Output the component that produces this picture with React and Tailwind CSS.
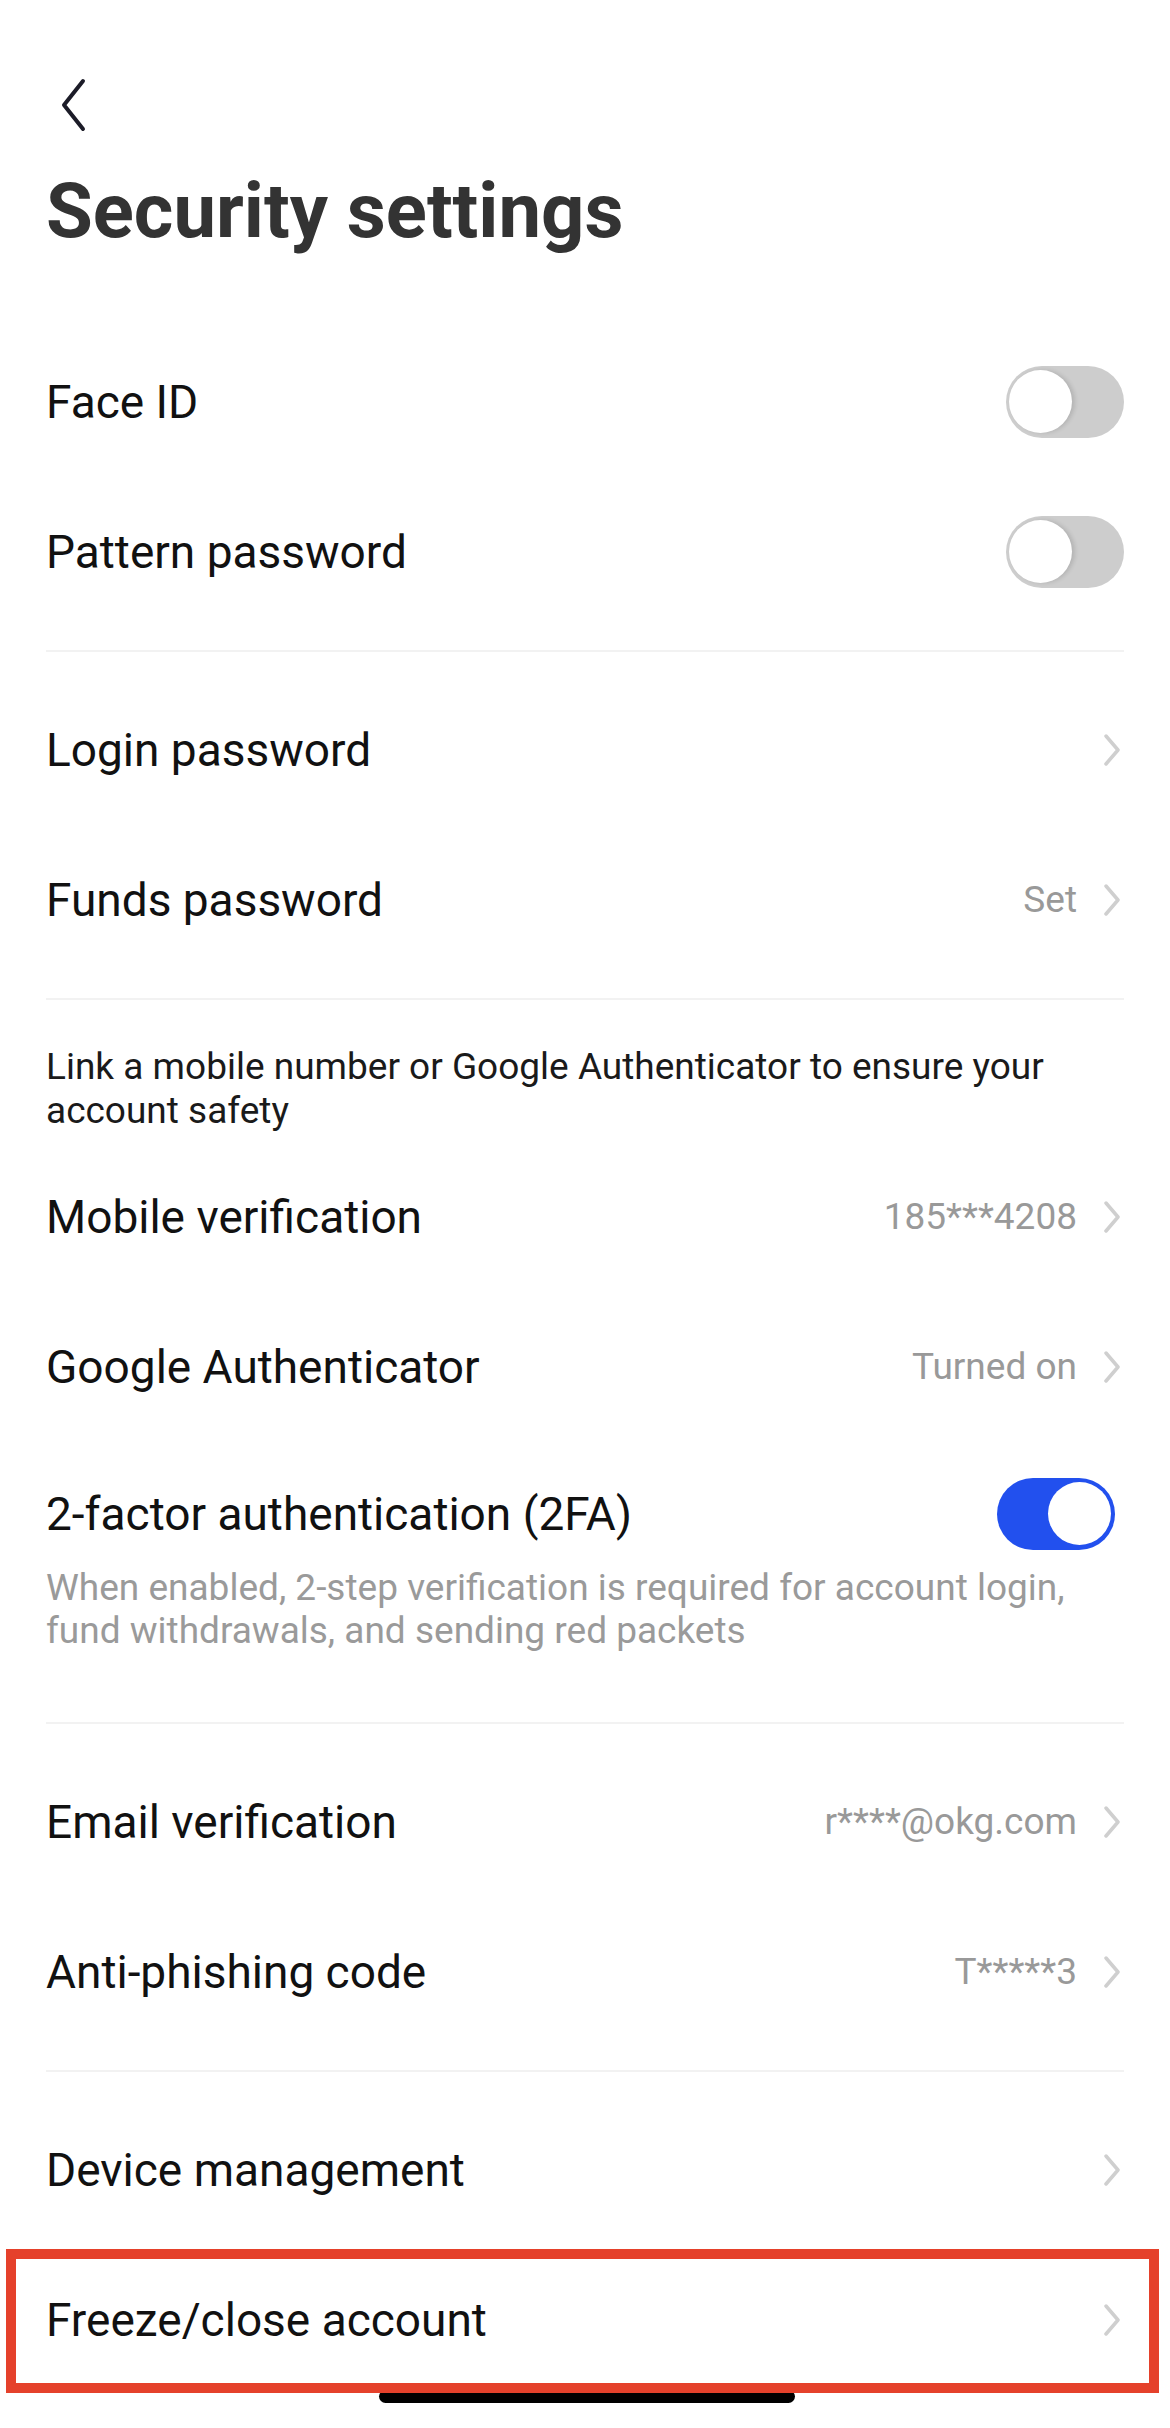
import { useState } from 'react';

// Simple iOS-like switch
function Toggle({ on }) {
  return (
    <div
      className={
        'relative h-[72px] w-[118px] shrink-0 rounded-full ' +
        (on ? 'bg-[#2250ee]' : 'bg-[#cdcdcd]')
      }
    >
      <div
        className={
          'absolute top-[4px] h-[63px] w-[63px] rounded-full bg-white ' +
          (on ? 'right-[4px]' : 'left-[3px] shadow-[3px_0_4px_rgba(0,0,0,0.12)]')
        }
      />
    </div>
  );
}

function Chevron() {
  return (
    <svg width="18" height="32" viewBox="0 0 18 32" fill="none" className="shrink-0">
      <path d="M3 2 L15 16 L3 30" stroke="#cfcfcf" strokeWidth="3.5" strokeLinecap="round" strokeLinejoin="round" />
    </svg>
  );
}

function Row({ label, value, toggle, on }) {
  return (
    <div className="flex h-[150px] items-center justify-between">
      <span className="text-[46px] leading-none text-[#111]">{label}</span>
      {toggle ? (
        <Toggle on={on} />
      ) : (
        <div className="flex items-center gap-[26px] pr-[3px]">
          {value && <span className="text-[37px] text-[#999]">{value}</span>}
          <Chevron />
        </div>
      )}
    </div>
  );
}

function Divider() {
  return <div className="my-[23px] h-[2px] bg-[#f2f2f2]" />;
}

export default function App() {
  const [rows] = useState({
    mobile: '185***4208',
    google: 'Turned on',
    email: 'r****@okg.com',
    phishing: 'T*****3',
  });

  return (
    <div
      className="relative h-[2428px] w-[1170px] overflow-hidden bg-white"
      style={{ fontFamily: 'Roboto, "Noto Sans", sans-serif' }}
    >
      <div className="px-[46px]">
        {/* Header */}
        <div className="pt-[78px]">
          <svg width="30" height="54" viewBox="0 0 30 54" fill="none" className="ml-[13px]">
            <path d="M24 3 L5 27 L24 51" stroke="#1c1c28" strokeWidth="4" strokeLinecap="round" strokeLinejoin="round" />
          </svg>
        </div>
        <h1 className="mt-[33px] text-[76px] font-bold leading-[92px] text-[#333]">Security settings</h1>

        <div className="mt-[70px]">
          <Row label="Face ID" toggle on={false} />
          <Row label="Pattern password" toggle on={false} />
        </div>
        <Divider />
        <Row label="Login password" />
        <Row label="Funds password" value="Set" />
        <Divider />

        <p className="pt-[22px] pb-[9px] text-[37px] leading-[44px] text-[#1a1a1a]">
          Link a mobile number or Google Authenticator to ensure your account safety
        </p>
        <Row label="Mobile verification" value={rows.mobile} />
        <Row label="Google Authenticator" value={rows.google} />

        {/* 2FA block */}
        <div className="pt-[44px] pb-[47px]">
          <div className="flex h-[56px] items-center justify-between">
            <span className="text-[46px] leading-none text-[#111]">2-factor authentication (2FA)</span>
            <div className="mr-[9px]">
              <Toggle on />
            </div>
          </div>
          <p className="mt-[24px] text-[37px] leading-[43px] text-[#9a9a9a]">
            When enabled, 2-step verification is required for account login, fund withdrawals, and sending red packets
          </p>
        </div>
        <Divider />
        <Row label="Email verification" value={rows.email} />
        <Row label="Anti-phishing code" value={rows.phishing} />
        <Divider />
        <Row label="Device management" />
        <Row label="Freeze/close account" />
      </div>

      {/* home indicator */}
      <div className="absolute left-[379px] top-[2390px] h-[13px] w-[416px] rounded-full bg-black" />

      {/* highlight box */}
      <div className="absolute left-[6px] top-[2249px] h-[144px] w-[1153px] border-[10px] border-[#e5412b]" />
    </div>
  );
}
